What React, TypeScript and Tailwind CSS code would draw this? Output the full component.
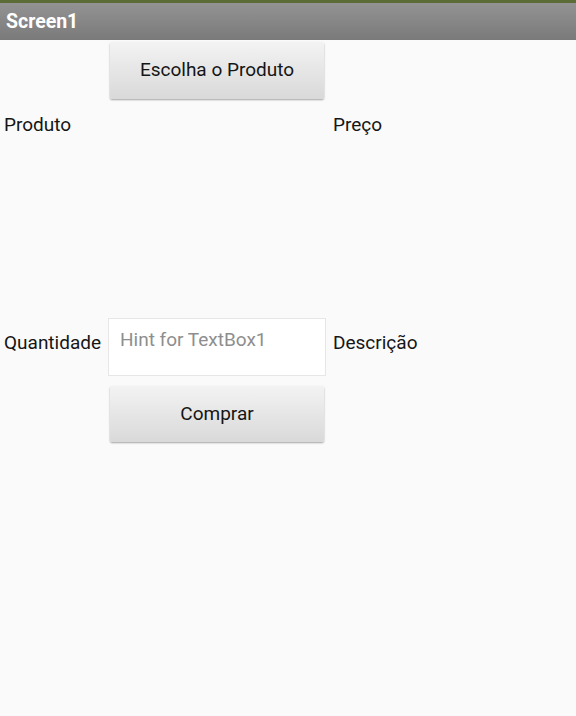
export default function App() {
  return (
    <div className="min-h-[716px] w-[576px] bg-[#fafafa] font-['Roboto',sans-serif] text-[#151515]">
      {/* status strip + title bar */}
      <div className="h-[3px] bg-[#5c6c36]" />
      <div className="flex h-[37px] items-center bg-gradient-to-b from-[#939393] to-[#7a7a7a] px-[6px]">
        <span className="text-[19.5px] font-bold text-white">Screen1</span>
      </div>

      <div className="grid grid-cols-[106px_222px_1fr] text-[19px]">
        {/* row 1 */}
        <div />
        <div className="pt-[2px] pl-[4px] pr-[4px]">
          <button className="flex h-[57px] w-[214px] items-center justify-center rounded-[2px] bg-gradient-to-b from-[#f3f3f3] to-[#d9d9d9] text-[19px] text-[#151515] shadow-[0_1px_2px_rgba(0,0,0,0.35)]">
            Escolha o Produto
          </button>
        </div>
        <div />

        {/* row 2 */}
        <div className="pl-[4px] pt-[14px] leading-[24px]">Produto</div>
        <div />
        <div className="pl-[5px] pt-[14px] leading-[24px]">Preço</div>

        {/* spacer */}
        <div className="col-span-3 h-[181px]" />

        {/* row 3 */}
        <div className="pl-[4px] pt-[13px] leading-[24px]">Quantidade</div>
        <div className="pl-[2px]">
          <div className="h-[58px] w-[218px] border border-[#e6e6e6] bg-white px-[11px] pt-[9px] leading-[24px] text-[#8e8e8e]">
            Hint for TextBox1
          </div>
        </div>
        <div className="pl-[5px] pt-[13px] leading-[24px]">Descrição</div>

        {/* row 4 */}
        <div />
        <div className="pt-[10px] pl-[4px]">
          <button className="flex h-[56px] w-[214px] items-center justify-center rounded-[2px] bg-gradient-to-b from-[#f3f3f3] to-[#d9d9d9] text-[19px] text-[#151515] shadow-[0_1px_2px_rgba(0,0,0,0.35)]">
            Comprar
          </button>
        </div>
        <div />
      </div>
    </div>
  );
}
